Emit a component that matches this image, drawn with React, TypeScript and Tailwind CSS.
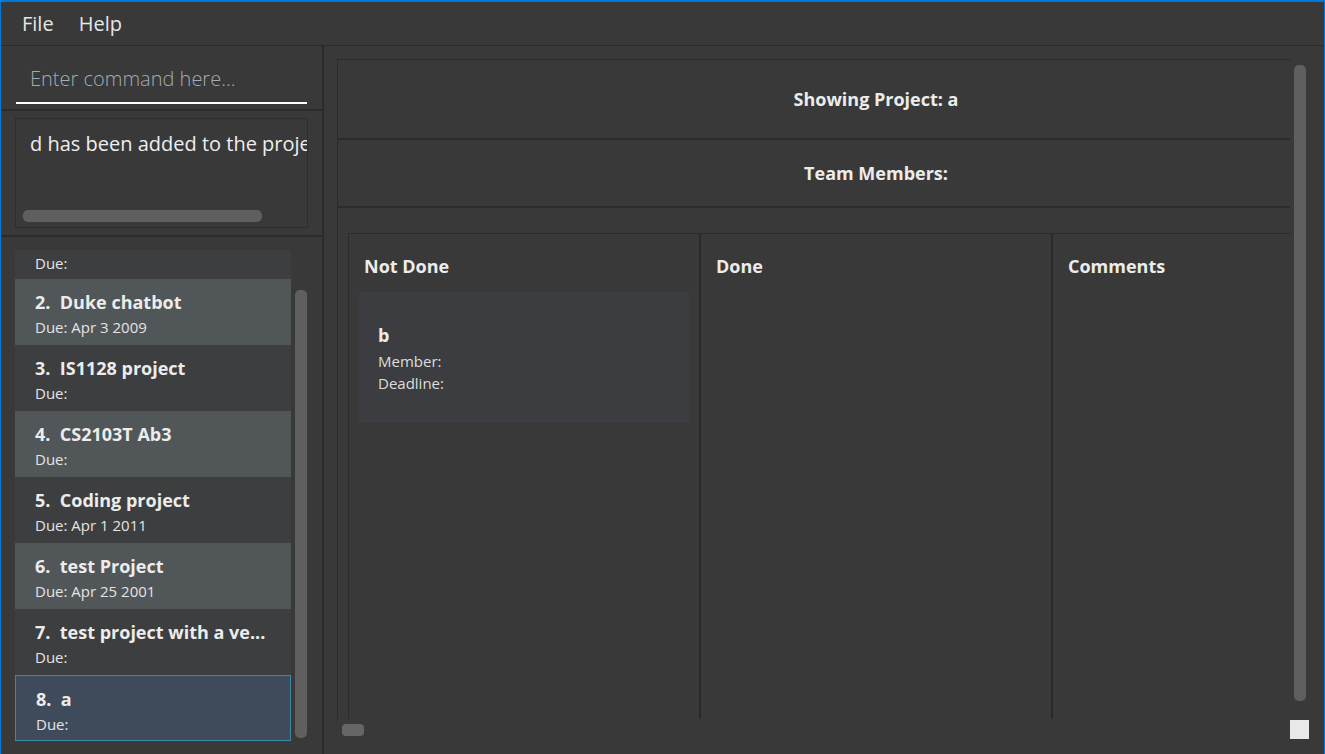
const font = { fontFamily: '"Open Sans", "Noto Sans", sans-serif' };

type Project = { no: number; name: string; due: string };

const projects: Project[] = [
  { no: 2, name: 'Duke chatbot', due: 'Apr 3 2009' },
  { no: 3, name: 'IS1128 project', due: '' },
  { no: 4, name: 'CS2103T Ab3', due: '' },
  { no: 5, name: 'Coding project', due: 'Apr 1 2011' },
  { no: 6, name: 'test Project', due: 'Apr 25 2001' },
  { no: 7, name: 'test project with a ve...', due: '' },
  { no: 8, name: 'a', due: '' },
];

function ProjectCard({ p, index }: { p: Project; index: number }) {
  const selected = p.no === 8;
  const bg = selected
    ? 'bg-[#3f4b5b] border border-[#3a8aa6]'
    : index % 2 === 0
      ? 'bg-[#515658]'
      : 'bg-[#3c3e3f]';
  return (
    <div className={`h-[66px] shrink-0 pl-5 pt-[10px] ${bg}`}>
      <p className="text-[18px] font-bold leading-[26px] text-[#ececec] whitespace-nowrap">
        {p.no}.&nbsp; {p.name}
      </p>
      <p className="mt-[2px] text-[15px] leading-[20px] text-[#e4e4e4]">Due:{p.due && ` ${p.due}`}</p>
    </div>
  );
}

function Column({ title, children, last }: { title: string; children?: React.ReactNode; last?: boolean }) {
  return (
    <div className={`w-[352px] shrink-0 ${last ? '' : 'border-r-2 border-[#2a2a2a]'} px-[10px] pt-[20px]`}>
      <h3 className="pl-[5px] text-[18px] font-bold leading-[24px] text-[#ececec]">{title}</h3>
      {children}
    </div>
  );
}

export default function App() {
  return (
    <div
      className="flex h-[754px] w-[1325px] flex-col overflow-hidden border-x border-t-2 border-[#0078d7] bg-[#393939]"
      style={font}
    >
      {/* Menu bar */}
      <div className="flex h-[44px] shrink-0 items-center gap-[25px] border-b border-[#2b2b2b] pl-[21px] text-[20px] text-[#e6e6e6]">
        <span>File</span>
        <span>Help</span>
      </div>

      <div className="flex min-h-0 flex-1">
        {/* Left panel */}
        <div className="flex w-[323px] shrink-0 flex-col border-r-2 border-[#2b2b2b]">
          {/* Command box */}
          <div className="h-[65px] shrink-0 border-b-2 border-[#2b2b2b] px-[15px] pt-[16px]">
            <div className="h-[42px] border-b-2 border-white pl-[14px] text-[20px] font-light leading-[34px] text-[#a3acb3]">
              Enter command here...
            </div>
          </div>

          {/* Result box */}
          <div className="h-[126px] shrink-0 border-b-2 border-[#2b2b2b] px-[14px] pt-[7px]">
            <div className="relative h-[110px] overflow-hidden border border-[#2e2e2e]">
              <p className="whitespace-nowrap pl-[14px] pt-[10px] text-[20px] leading-[30px] text-[#eeeeee]">
                d has been added to the project
              </p>
              <div className="absolute bottom-[5px] left-[7px] h-[12px] w-[239px] rounded-[5px] bg-[#5f5f5f]" />
            </div>
          </div>

          {/* Project list */}
          <div className="flex min-h-0 flex-1 gap-[4px] pl-[14px] pr-[14px] pt-[13px]">
            <div className="flex w-[276px] shrink-0 flex-col">
              <div className="h-[29px] shrink-0 bg-[#3c3e3f] pl-5 text-[15px] leading-[26px] text-[#e4e4e4]">Due:</div>
              {projects.map((p, i) => (
                <ProjectCard key={p.no} p={p} index={i} />
              ))}
            </div>
            <div className="mt-[40px] h-[448px] w-[12px] rounded-[5px] bg-[#5f5f5f]" />
          </div>
        </div>

        {/* Right panel */}
        <div className="min-w-0 flex-1 pl-[13px] pt-[13px]">
          <div className="grid grid-cols-[953px_20px] grid-rows-[660px_22px]">
            {/* Viewport */}
            <div className="overflow-hidden border-l border-t border-[#2b2b2b]">
              <div className="flex h-full w-[1076px] flex-col">
                <div className="flex h-[80px] shrink-0 items-center justify-center border-b-2 border-[#2b2b2b] text-[18px] font-bold text-[#ececec]">
                  Showing Project: a
                </div>
                <div className="flex h-[68px] shrink-0 items-center justify-center border-b-2 border-[#2b2b2b] text-[18px] font-bold text-[#ececec]">
                  Team Members:
                </div>
                <div className="ml-[10px] mt-[25px] flex min-h-0 flex-1 border-l border-t border-[#2b2b2b]">
                  <Column title="Not Done">
                    <div className="mt-[14px] h-[131px] bg-[#3c3d40] pl-[19px] pt-[31px]">
                      <p className="text-[18px] font-bold leading-[24px] text-[#ececec]">b</p>
                      <p className="mt-[3px] text-[15px] leading-[22px] text-[#dddddd]">Member:</p>
                      <p className="text-[15px] leading-[22px] text-[#dddddd]">Deadline:</p>
                    </div>
                  </Column>
                  <Column title="Done" />
                  <Column title="Comments" last />
                </div>
              </div>
            </div>

            {/* Vertical scrollbar */}
            <div className="pl-[4px] pt-[6px]">
              <div className="h-[636px] w-[12px] rounded-[5px] bg-[#5f5f5f]" />
            </div>

            {/* Horizontal scrollbar */}
            <div className="pl-[5px] pt-[5px]">
              <div className="h-[12px] w-[22px] rounded-[4px] bg-[#666666]" />
            </div>

            {/* Corner */}
            <div className="pt-[1px]">
              <div className="h-[19px] w-[19px] bg-[#e8e8e8]" />
            </div>
          </div>
        </div>
      </div>
    </div>
  );
}
